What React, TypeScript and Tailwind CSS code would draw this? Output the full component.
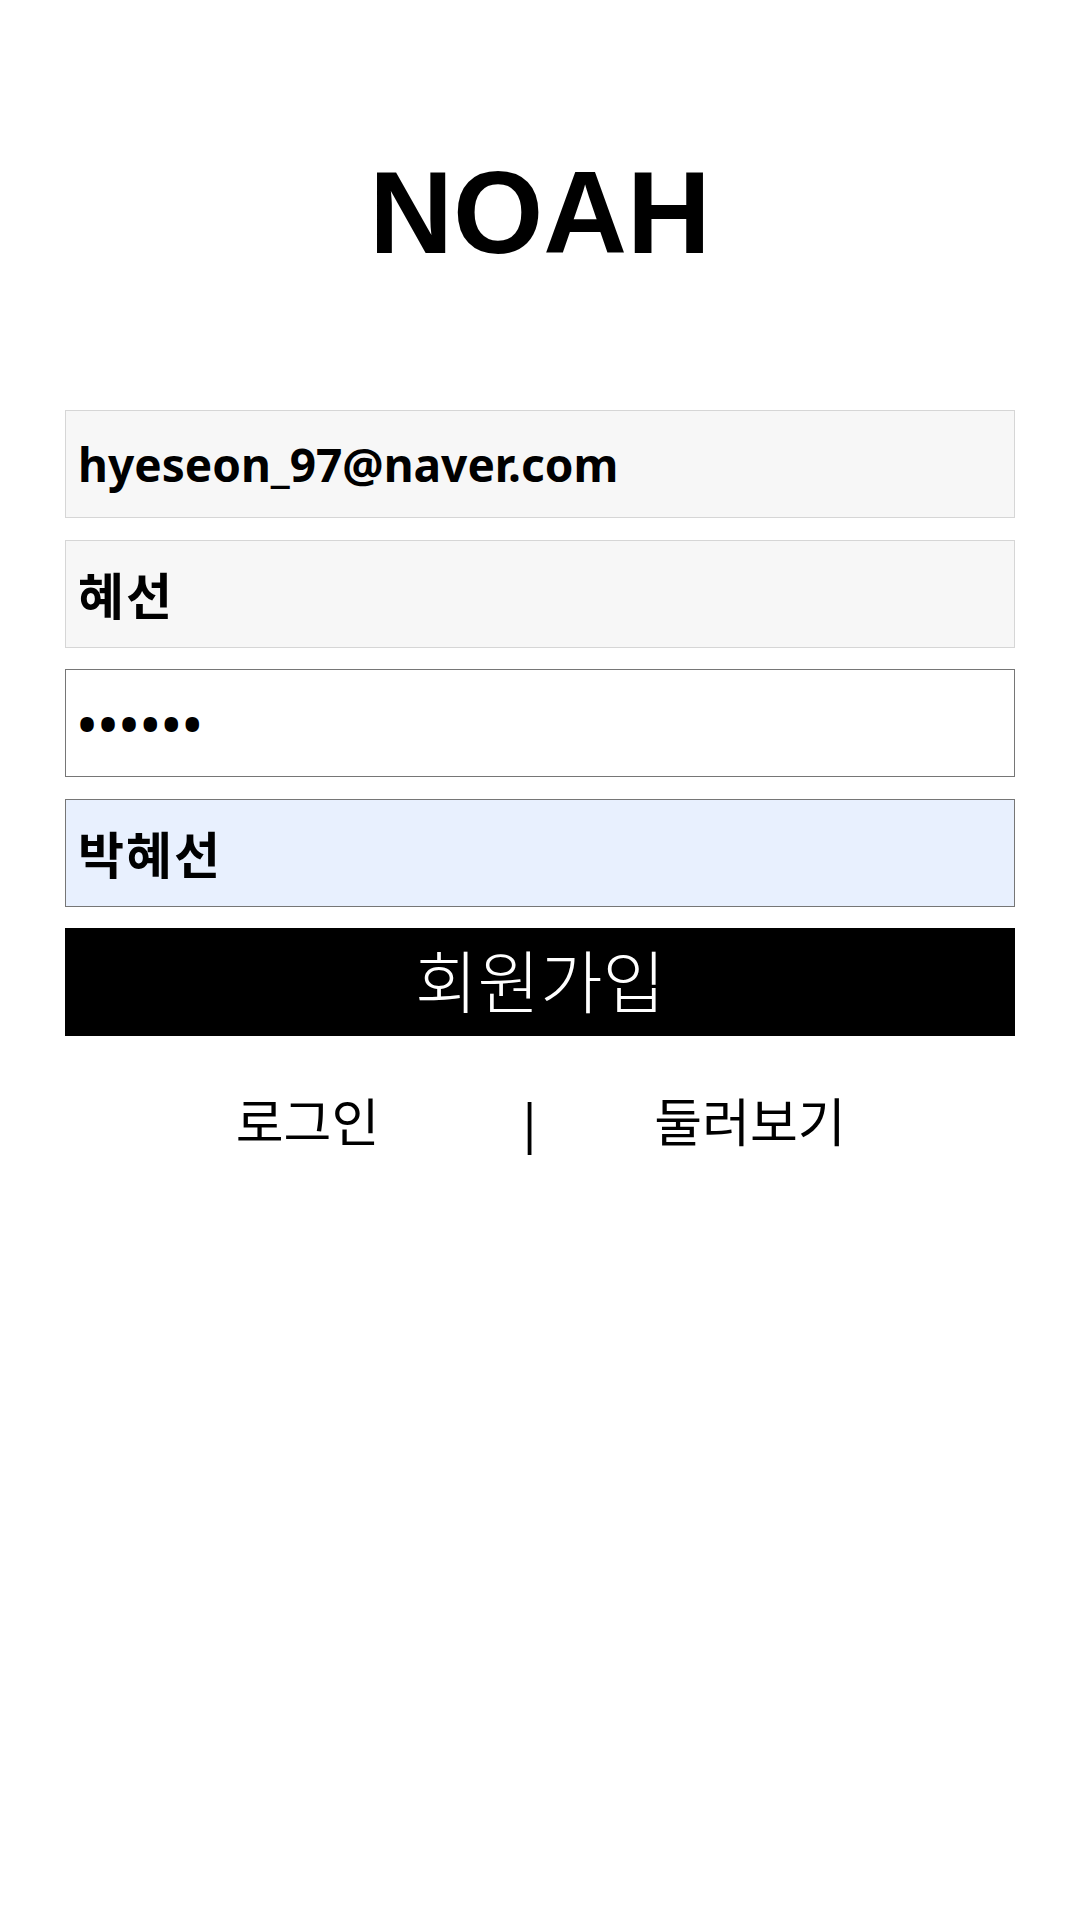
import React from 'react';

const font = { fontFamily: '"Noto Sans", "Noto Sans CJK KR", sans-serif' };

const App: React.FC = () => {
  return (
    <div className="min-h-[1920px] w-[1080px] bg-white text-black" style={font}>
      <h1
        className="pt-[155px] text-center text-[116px] font-bold leading-none"
        style={{ fontFamily: '"Liberation Sans", Arial, sans-serif' }}
      >
        NOAH
      </h1>

      <form className="mx-auto mt-[139px] flex w-[950px] flex-col gap-[21.5px]">
        <input
          type="email"
          readOnly
          value="hyeseon_97@naver.com"
          className="h-[108px] w-full border border-[#d6d6d6] bg-[#f7f7f7] px-[12px] text-[46px] font-bold text-black outline-none"
        />
        <input
          type="text"
          readOnly
          value="혜선"
          className="h-[108px] w-full border border-[#d6d6d6] bg-[#f7f7f7] px-[12px] text-[50px] font-bold tracking-[2px] text-black outline-none"
        />
        <input
          type="password"
          readOnly
          value="123456"
          className="h-[108px] w-full border border-[#767676] bg-white px-[12px] text-[48px] font-bold tracking-[3px] text-black outline-none"
        />
        <input
          type="text"
          readOnly
          value="박혜선"
          className="h-[108px] w-full border border-[#767676] bg-[#e8f0fe] px-[12px] text-[50px] font-bold tracking-[2px] text-black outline-none"
        />
        <button
          type="button"
          className="flex h-[108px] w-full items-center justify-center bg-black text-[68px] font-light leading-none text-white"
        >
          회원가입
        </button>
      </form>

      <div className="mt-[60px] flex justify-center text-[52px] leading-none">
        <span className="flex w-[136px] shrink-0 justify-center whitespace-nowrap">로그인</span>
        <span className="ml-[151px] flex w-[6px] shrink-0 justify-center">|</span>
        <span className="ml-[127px] flex w-[181px] shrink-0 justify-center whitespace-nowrap">둘러보기</span>
      </div>
    </div>
  );
};

export default App;
